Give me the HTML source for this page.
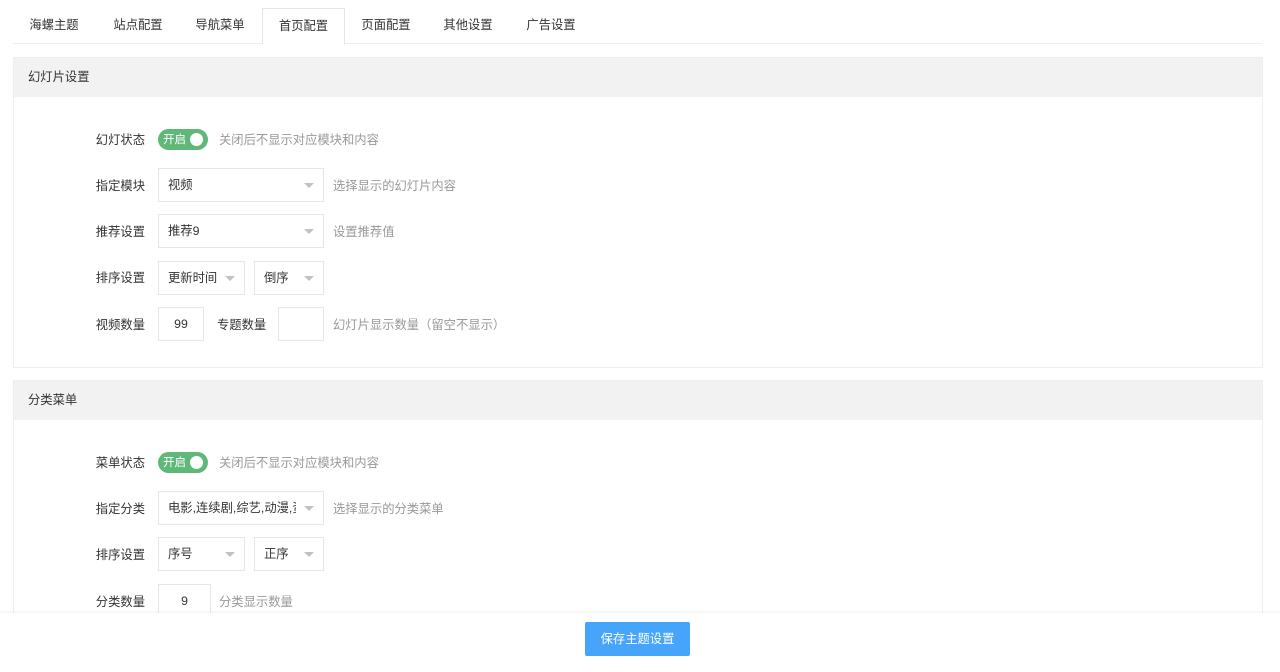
<!DOCTYPE html>
<html><head><meta charset="utf-8"><style>
*{box-sizing:border-box;margin:0;padding:0}
html,body{width:1280px;height:672px;overflow:hidden}
body{background:#fff;font-family:"Liberation Sans","Noto Sans CJK SC",sans-serif;font-size:12.3px;color:#333;position:relative}
.tabs{position:absolute;left:13px;top:8px;width:1249px;height:36px;border-bottom:1px solid #eee}
.tab{position:absolute;top:0;height:36px;line-height:35px;text-align:center;color:#333}
.tab.act{border:1px solid #e6e6e6;border-bottom:1px solid #fff;background:#fff;height:37px}
.card{position:absolute;left:13px;width:1250px;border:1px solid #eee;background:#fff}
.hd{height:39px;background:#f2f2f2;line-height:38px;padding-left:14px;color:#333}
.a{position:absolute}
.lbl{position:absolute;width:60px;text-align:right;left:85px}
.inp{position:absolute;height:34px;border:1px solid #e6e6e6;background:#fff;line-height:33px;padding-left:9px;white-space:nowrap;overflow:hidden}
.arr{position:absolute;right:9px;top:14px;width:0;height:0;border-left:5px solid transparent;border-right:5px solid transparent;border-top:5px solid #c2c2c2}
.help{position:absolute;color:#999}
.sw{position:absolute;left:158px;width:50px;height:21px;border-radius:11px;background:#5fb878;color:#fff;font-size:11.5px;line-height:22px;padding-left:5px}
.sw:after{content:"";position:absolute;right:5px;top:4px;width:13px;height:13px;border-radius:50%;background:#fff}
.foot{position:absolute;left:0;top:613px;width:1280px;height:59px;background:#fff;box-shadow:0 -1px 2px rgba(0,0,0,.06)}
.btn{position:absolute;left:585px;top:9px;width:105px;height:34px;background:#47a4fb;color:#fff;line-height:34px;text-align:center;border-radius:2px}
</style></head><body>
<div class="tabs">
<div class="tab" style="left:0;width:82px">海螺主题</div>
<div class="tab" style="left:84px;width:82px">站点配置</div>
<div class="tab" style="left:166px;width:82px">导航菜单</div>
<div class="tab act" style="left:249px;width:83px">首页配置</div>
<div class="tab" style="left:332px;width:82px">页面配置</div>
<div class="tab" style="left:414px;width:82px">其他设置</div>
<div class="tab" style="left:497px;width:82px">广告设置</div>
</div>

<div class="card" style="top:57px;height:311px"><div class="hd">幻灯片设置</div></div>
<div class="card" style="top:380px;height:292px;border-bottom:none"><div class="hd">分类菜单</div></div>

<div class="lbl" style="top:130px">幻灯状态</div>
<div class="sw" style="top:129px">开启</div>
<div class="help" style="left:219px;top:130px">关闭后不显示对应模块和内容</div>

<div class="lbl" style="top:176px">指定模块</div>
<div class="inp" style="left:158px;top:168px;width:166px">视频<i class="arr"></i></div>
<div class="help" style="left:333px;top:176px">选择显示的幻灯片内容</div>

<div class="lbl" style="top:222px">推荐设置</div>
<div class="inp" style="left:158px;top:214px;width:166px">推荐9<i class="arr"></i></div>
<div class="help" style="left:333px;top:222px">设置推荐值</div>

<div class="lbl" style="top:268px">排序设置</div>
<div class="inp" style="left:158px;top:261px;width:87px">更新时间<i class="arr"></i></div>
<div class="inp" style="left:254px;top:261px;width:70px">倒序<i class="arr"></i></div>

<div class="lbl" style="top:315px">视频数量</div>
<div class="inp" style="left:158px;top:307px;width:46px;text-align:center;padding:0">99</div>
<div class="a" style="left:217px;top:315px">专题数量</div>
<div class="inp" style="left:278px;top:307px;width:46px"></div>
<div class="help" style="left:333px;top:315px">幻灯片显示数量（留空不显示）</div>

<div class="lbl" style="top:453px">菜单状态</div>
<div class="sw" style="top:452px">开启</div>
<div class="help" style="left:219px;top:453px">关闭后不显示对应模块和内容</div>

<div class="lbl" style="top:499px">指定分类</div>
<div class="inp" style="left:158px;top:491px;width:166px"><span style="display:block;width:128px;overflow:hidden">电影,连续剧,综艺,动漫,资讯</span><i class="arr"></i></div>
<div class="help" style="left:333px;top:499px">选择显示的分类菜单</div>

<div class="lbl" style="top:545px">排序设置</div>
<div class="inp" style="left:158px;top:537px;width:87px">序号<i class="arr"></i></div>
<div class="inp" style="left:254px;top:537px;width:70px">正序<i class="arr"></i></div>

<div class="lbl" style="top:592px">分类数量</div>
<div class="inp" style="left:158px;top:584px;width:53px;text-align:center;padding:0">9</div>
<div class="help" style="left:219px;top:592px">分类显示数量</div>

<div class="foot"><div class="btn">保存主题设置</div></div>
</body></html>
